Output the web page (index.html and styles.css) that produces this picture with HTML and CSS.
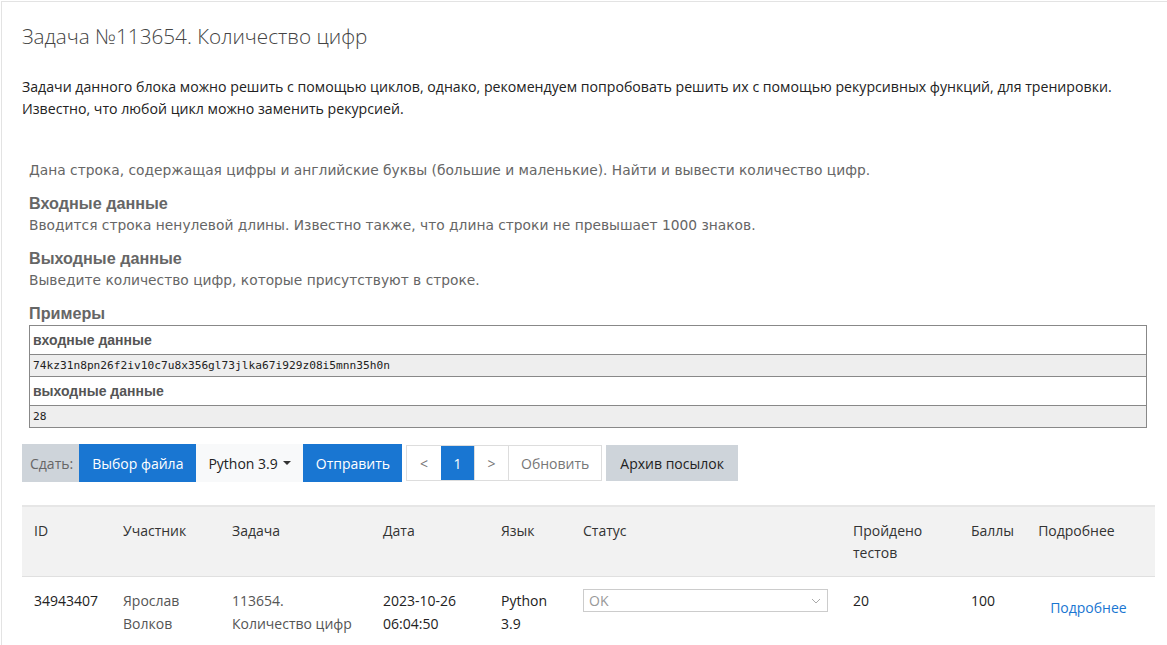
FILE: index.html
```html
<!DOCTYPE html>
<html lang="ru">
<head>
<meta charset="utf-8">
<title>Задача №113654. Количество цифр</title>
<link rel="stylesheet" href="styles.css">
</head>
<body>
<div class="card">
  <h1 class="title">Задача №113654. Количество цифр</h1>
  <p class="intro">Задачи данного блока можно решить с помощью циклов, однако, рекомендуем попробовать решить их с помощью рекурсивных функций, для тренировки.<br>Известно, что любой цикл можно заменить рекурсией.</p>

  <div class="statement">
    <p class="legend">Дана строка, содержащая цифры и английские буквы (большие и маленькие). Найти и вывести количество цифр.</p>
    <h3 class="sec">Входные данные</h3>
    <p class="sec-text">Вводится строка ненулевой длины. Известно также, что длина строки не превышает 1000 знаков.</p>
    <h3 class="sec">Выходные данные</h3>
    <p class="sec-text">Выведите количество цифр, которые присутствуют в строке.</p>
    <h3 class="sec">Примеры</h3>
    <table class="examples">
      <tr><th>входные данные</th></tr>
      <tr><td>74kz31n8pn26f2iv10c7u8x356gl73jlka67i929z08i5mnn35h0n</td></tr>
      <tr><th>выходные данные</th></tr>
      <tr><td>28</td></tr>
    </table>
  </div>

  <div class="toolbar">
    <div class="group">
      <span class="addon">Сдать:</span>
      <span class="btn btn-blue">Выбор файла</span>
      <span class="btn btn-light">Python 3.9 <span class="caret"></span></span>
      <span class="btn btn-blue btn-send">Отправить</span>
    </div>
    <div class="pager">
      <span class="pg">&lt;</span>
      <span class="pg pg-active">1</span>
      <span class="pg">&gt;</span>
      <span class="pg pg-text">Обновить</span>
    </div>
    <span class="btn btn-grey">Архив посылок</span>
  </div>

  <table class="runs">
    <thead>
      <tr>
        <th class="c-id">ID</th>
        <th class="c-user">Участник</th>
        <th class="c-task">Задача</th>
        <th class="c-date">Дата</th>
        <th class="c-lang">Язык</th>
        <th class="c-status">Статус</th>
        <th class="c-tests">Пройдено тестов</th>
        <th class="c-score">Баллы</th>
        <th class="c-more">Подробнее</th>
      </tr>
    </thead>
    <tbody>
      <tr>
        <td>34943407</td>
        <td class="muted">Ярослав Волков</td>
        <td class="muted">113654. Количество цифр</td>
        <td>2023-10-26 06:04:50</td>
        <td>Python 3.9</td>
        <td><div class="select"><span>OK</span><svg width="10" height="6" viewBox="0 0 10 6"><path d="M1 1l4 4 4-4" fill="none" stroke="#aaa" stroke-width="1"/></svg></div></td>
        <td>20</td>
        <td>100</td>
        <td class="more"><a href="#">Подробнее</a></td>
      </tr>
    </tbody>
  </table>
</div>
</body>
</html>
```
FILE: styles.css
```css
* { box-sizing: border-box; }
body {
  margin: 0;
  background: #fff;
  font-family: "Open Sans", "Noto Sans", sans-serif;
  color: #333;
}
.card {
  margin: 1px 0 0 1px;
  border-top: 1px solid #e3e3e3;
  border-left: 1px solid #e3e3e3;
  padding: 0 20px 40px 20px;
}
.title {
  margin: 19px 0 0 0;
  font-size: 20.7px;
  font-weight: 300;
  line-height: 30px;
  color: #444;
}
.intro {
  margin: 25px 0 0 0;
  font-size: 14.15px;
  line-height: 22px;
  color: #222;
}
.statement {
  margin: 39px 0 0 7px;
  font-family: "DejaVu Sans", Verdana, sans-serif;
  color: #666;
}
.legend {
  margin: 0;
  font-size: 13.8px;
  line-height: 22px;
}
.sec {
  margin: 11px 0 0 0;
  font-family: "Liberation Sans", Arial, sans-serif;
  font-weight: bold;
  font-size: 16.2px;
  line-height: 22px;
  color: #666;
}
.sec-text {
  margin: 0;
  font-size: 13.8px;
  line-height: 22px;
}
.examples {
  margin-top: 1px;
  width: 1118px;
  border-collapse: collapse;
  border: 1px solid #888;
}
.examples th {
  text-align: left;
  font-family: "Liberation Sans", Arial, sans-serif;
  font-weight: bold;
  font-size: 14px;
  color: #555;
  height: 29px;
  padding: 0 3px;
  border: 1px solid #888;
  background: #fff;
}
.examples td {
  font-family: "DejaVu Sans Mono", "Liberation Mono", monospace;
  font-size: 11.2px;
  color: #222;
  height: 22px;
  padding: 0 3px;
  border: 1px solid #888;
  background: #eee;
}
.toolbar {
  margin-top: 16px;
  display: flex;
  align-items: center;
  gap: 4px;
}
.group { display: flex; height: 38px; }
.addon {
  display: flex;
  align-items: center;
  padding: 0 6px 0 8px;
  background: #ced4da;
  color: #666;
  font-size: 14px;
}
.btn {
  display: flex;
  align-items: center;
  padding: 0 13px;
  font-size: 14px;
  height: 38px;
}
.btn-blue { background: #1976d2; color: #fff; }
.btn-send { padding: 0 12px 0 13px; }
.btn-light { background: #f8f9fa; color: #222; padding: 0 12px 0 12px; }
.btn-grey { background: #ced4da; color: #222; height: 36px; padding: 0 14px; }
.caret {
  display: inline-block;
  margin-left: 5px;
  border-top: 4px solid #333;
  border-left: 4px solid transparent;
  border-right: 4px solid transparent;
}
.pager {
  display: flex;
  height: 36px;
  border: 1px solid #ddd;
}
.pg {
  display: flex;
  align-items: center;
  justify-content: center;
  width: 34px;
  font-size: 14px;
  color: #777;
  border-left: 1px solid #ddd;
}
.pg:first-child { border-left: 0; }
.pg-active { background: #1976d2; color: #fff; border-left: 0; width: 33px; }
.pg-text { width: auto; padding: 0 12px; }
.runs {
  margin-top: 23px;
  width: 1133px;
  border-collapse: collapse;
  font-size: 14px;
  color: #222;
}
.runs thead tr { background: #f2f2f2; border-top: 2px solid #e6e6e6; border-bottom: 1px solid #e0e0e0; }
.runs th {
  text-align: left;
  font-weight: 400;
  vertical-align: top;
  line-height: 22px;
  padding: 13px 12px 12px 12px;
  color: #333;
}
.runs td {
  vertical-align: top;
  line-height: 23px;
  padding: 12px 12px 0 12px;
}
.c-id { width: 89px; }
.c-user { width: 109px; }
.c-task { width: 151px; }
.c-date { width: 118px; }
.c-lang { width: 82px; }
.c-status { width: 270px; }
.c-tests { width: 118px; }
.c-score { width: 67px; }
.muted { color: #555; }
.select {
  display: flex;
  align-items: center;
  justify-content: space-between;
  width: 245px;
  height: 23px;
  margin-top: 0;
  border: 1px solid #ccc;
  padding: 0 6px 0 5px;
  color: #999;
}
.more { padding-top: 19px !important; padding-left: 24px !important; }
.more a { color: #1976d2; text-decoration: none; }
```
